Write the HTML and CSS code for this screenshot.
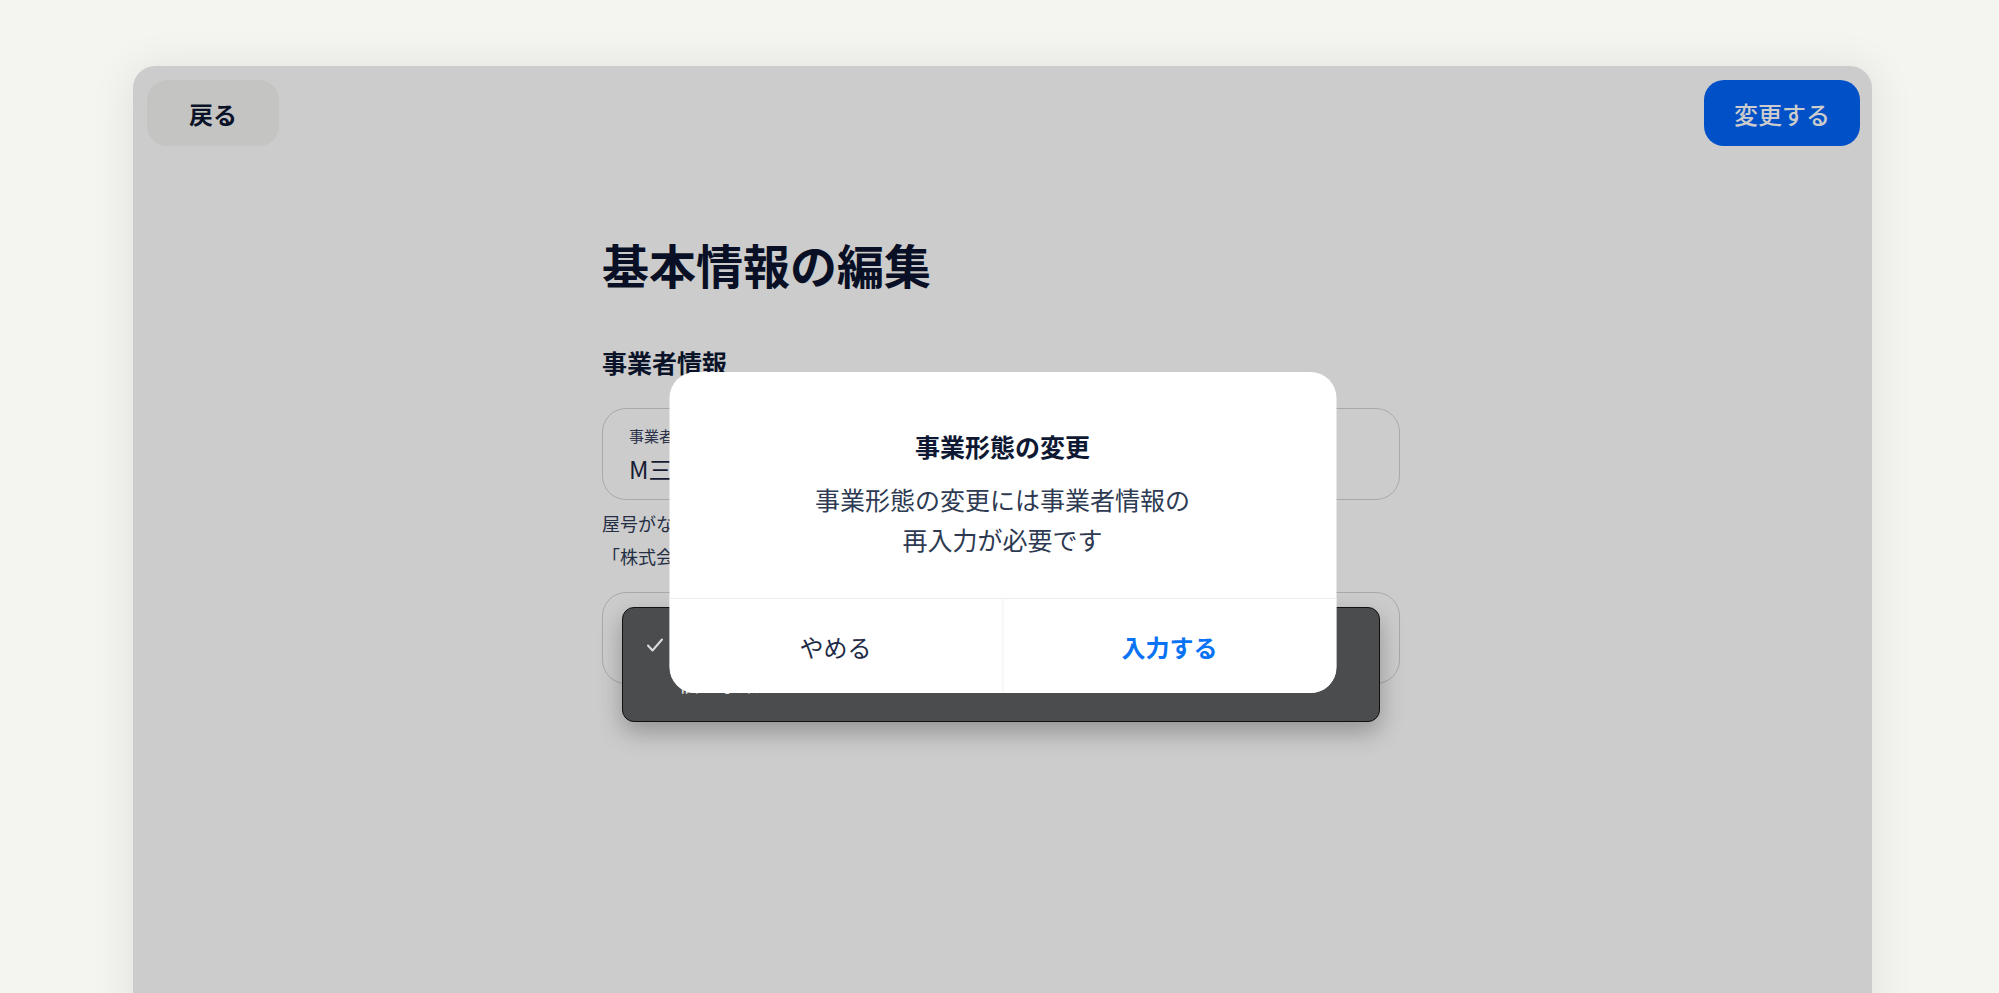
FILE: index.html
```html
<!DOCTYPE html>
<html lang="ja">

<head>
  <meta charset="UTF-8">
  <meta name="viewport" content="width=device-width, initial-scale=1.0">
  <title>基本情報の編集</title>
  <link rel="stylesheet" href="styles.css">
</head>

<body>

  <div class="card">
    <header class="topbar">
      <button class="btn-back">戻る</button>
      <button class="btn-save">変更する</button>
    </header>

    <main class="form">
      <h1>基本情報の編集</h1>
      <h2>事業者情報</h2>

      <div class="field">
        <span class="field-label">事業者名・屋号</span>
        <span class="field-value">M三商事</span>
      </div>
      <p class="hint">屋号がない場合は、法人名または氏名を入力してください<br>「株式会社」などの法人格も含めて入力してください</p>

      <div class="field field-select">
        <span class="field-label">事業形態</span>
        <span class="field-value">法人</span>

        <!-- native select popup, left open -->
        <ul class="select-menu">
          <li class="selected">
            <svg class="check" viewBox="0 0 18 16" width="18" height="16">
              <path d="M2 8.5l4.5 5L16 2.5" fill="none" stroke="currentColor" stroke-width="2" stroke-linecap="round" stroke-linejoin="round" />
            </svg>
            <span>法人</span>
          </li>
          <li><span>個人事業主</span></li>
        </ul>
      </div>
    </main>

    <div class="dim"></div>

    <div class="dialog">
      <div class="dialog-body">
        <h3>事業形態の変更</h3>
        <p>事業形態の変更には事業者情報の<br>再入力が必要です</p>
      </div>
      <div class="dialog-actions">
        <button class="dialog-cancel">やめる</button>
        <button class="dialog-ok">入力する</button>
      </div>
    </div>
  </div>

</body>

</html>
```

FILE: styles.css
```css
body {
  margin: 0;
  padding: 66px 0 0;
  font-family: 'Noto Sans CJK JP', 'Noto Sans', sans-serif;
  background-color: #f4f4f0;
  color: #0e1833;
  overflow: hidden;
}

button {
  font-family: inherit;
  border: none;
  cursor: pointer;
}

.card {
  position: relative;
  margin-left: 133px;
  width: 1739px;
  height: 1000px;
  background: #ffffff;
  border-radius: 22px;
  box-shadow: 0px 4px 40px 6px rgba(0, 0, 0, 0.07);
}

.topbar {
  display: flex;
  justify-content: space-between;
  padding: 14px 12px 0 14px;
}

.btn-back {
  height: 66px;
  padding: 0 42px;
  background: #f6f6f4;
  color: #0e1833;
  border-radius: 20px;
  font-size: 24px;
  font-weight: bold;
}

.btn-save {
  height: 66px;
  padding: 0 30px;
  background: #0064fa;
  color: #ffffff;
  border-radius: 20px;
  font-size: 24px;
  font-weight: 500;
}

.form {
  width: 798px;
  margin-left: 469px;
  padding-top: 85px;
}

h1 {
  margin: 0;
  font-size: 47px;
  line-height: 66px;
  font-weight: bold;
  color: #0c1530;
}

h2 {
  margin: 48px 0 0;
  font-size: 25px;
  line-height: 35px;
  font-weight: bold;
}

.field {
  position: relative;
  box-sizing: border-box;
  height: 92px;
  margin-top: 28px;
  padding: 16px 26px 0;
  border: 1px solid #d4d4d4;
  border-radius: 24px;
  display: flex;
  flex-direction: column;
  gap: 6px;
}

.field-label {
  font-size: 15px;
  line-height: 21px;
  color: #35405a;
}

.field-value {
  font-size: 24px;
  line-height: 33px;
  color: #1c2640;
}

.hint {
  margin: 7px 0 0;
  font-size: 18px;
  line-height: 33px;
  color: #2e3a55;
}

.field-select {
  margin-top: 19px;
}

.select-menu {
  position: absolute;
  z-index: 2;
  top: 14px;
  left: 19px;
  width: 758px;
  height: 115px;
  box-sizing: border-box;
  margin: 0;
  padding: 16px 23px;
  list-style: none;
  background: #4b4c4e;
  border: 1.5px solid #111111;
  border-radius: 12px;
  box-shadow: 0px 10px 24px rgba(0, 0, 0, 0.28);
  color: #e8e8e8;
  font-size: 20px;
}

.select-menu li {
  display: flex;
  align-items: center;
  height: 34px;
  padding-left: 33px;
}

.select-menu li.selected {
  height: 42px;
  padding-left: 0;
  gap: 15px;
}

.check {
  color: #dcdcdc;
}

.dim {
  position: absolute;
  z-index: 1;
  inset: 0;
  border-radius: 22px;
  background: rgba(0, 0, 0, 0.2);
}

.dialog {
  position: absolute;
  z-index: 3;
  top: 306px;
  left: 50%;
  transform: translateX(-50%);
  width: 667px;
  background: #ffffff;
  border-radius: 26px;
  overflow: hidden;
  text-align: center;
}

.dialog-body {
  padding: 57px 20px 39px;
}

.dialog h3 {
  margin: 0;
  font-size: 25px;
  line-height: 35px;
  font-weight: bold;
  color: #0e1833;
}

.dialog p {
  margin: 15px 0 0;
  font-size: 25px;
  line-height: 40px;
  color: #2d3a52;
}

.dialog-actions {
  display: flex;
  border-top: 1px solid #ecece8;
}

.dialog-actions button {
  flex: 1;
  height: 94px;
  background: #ffffff;
  font-size: 24px;
}

.dialog-cancel {
  color: #1e2a46;
  border-right: 1px solid #ecece8;
}

.dialog-ok {
  color: #0a72f5;
  font-weight: bold;
}
```
